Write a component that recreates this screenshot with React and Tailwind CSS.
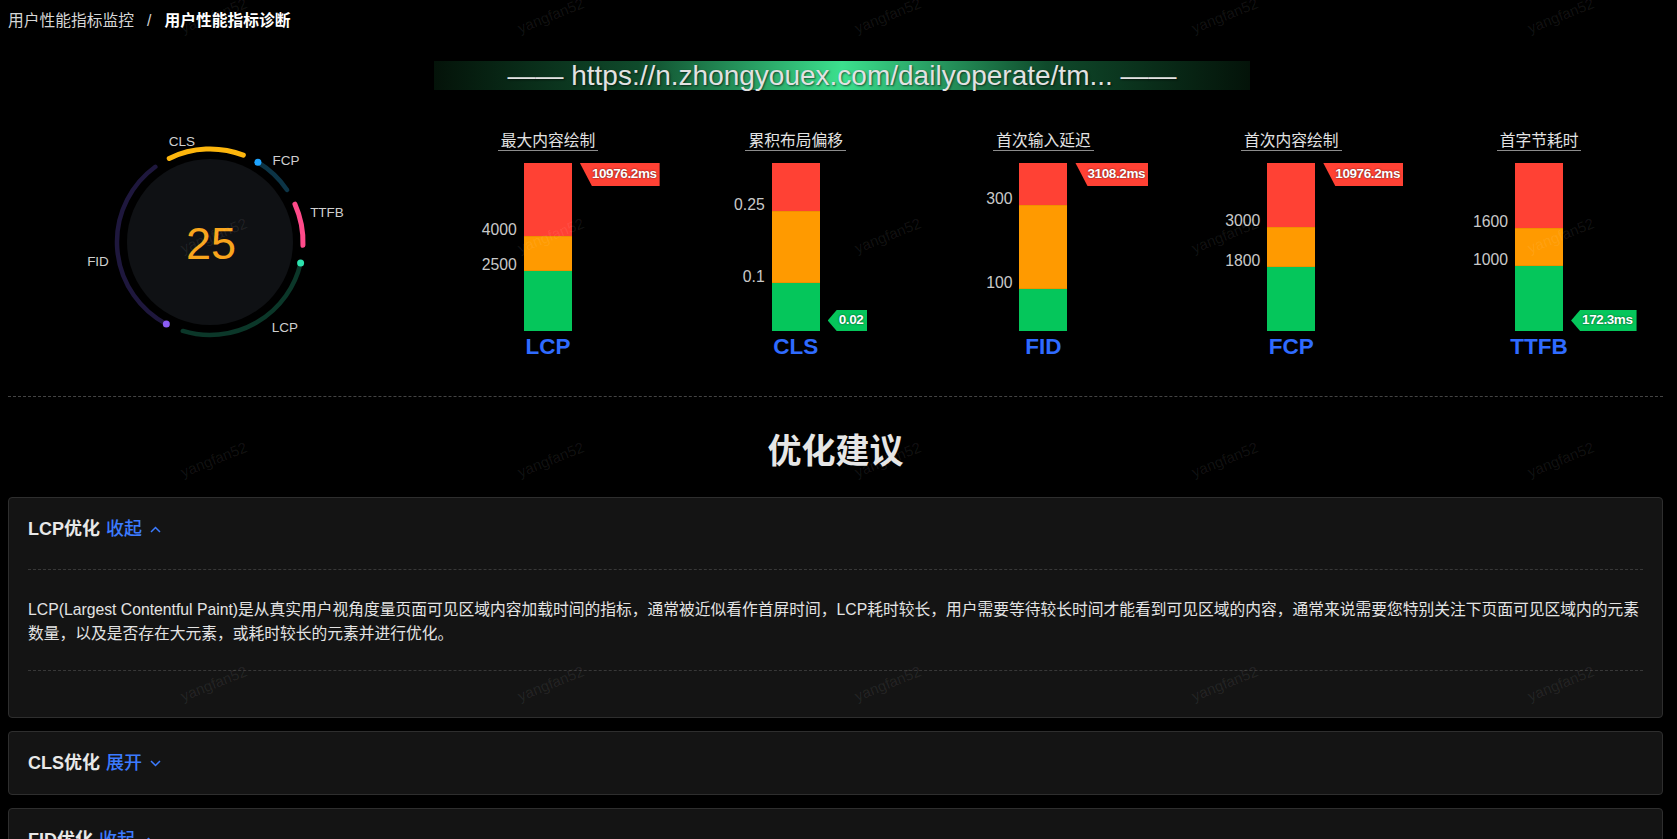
import React from "react";

const metrics = [
  { title: "最大内容绘制", name: "LCP", seg: [73, 35], marks: ["4000", "2500"], badge: "bad", value: "10976.2ms" },
  { title: "累积布局偏移", name: "CLS", seg: [48, 72], marks: ["0.25", "0.1"], badge: "good", value: "0.02" },
  { title: "首次输入延迟", name: "FID", seg: [42, 84], marks: ["300", "100"], badge: "bad", value: "3108.2ms" },
  { title: "首次内容绘制", name: "FCP", seg: [64, 40], marks: ["3000", "1800"], badge: "bad", value: "10976.2ms" },
  { title: "首字节耗时", name: "TTFB", seg: [65, 38], marks: ["1600", "1000"], badge: "good", value: "172.3ms" },
];

const watermarks = [];
for (const y of [16, 236, 460, 684]) {
  for (const x of [214, 551, 888, 1225, 1561]) watermarks.push({ x, y });
}

// gauge geometry
const cx = 202;
const cy = 132;
const R = 93;
const pt = (a) => {
  const r = (a * Math.PI) / 180;
  return [cx + R * Math.sin(r), cy - R * Math.cos(r)];
};
const arc = (a1, a2) => {
  const [x1, y1] = pt(a1);
  const [x2, y2] = pt(a2);
  const large = a2 - a1 > 180 ? 1 : 0;
  return `M ${x1} ${y1} A ${R} ${R} 0 ${large} 1 ${x2} ${y2}`;
};

function Gauge() {
  const dots = [
    [31, "#1ea4ff"],
    [103, "#2de3ae"],
    [208, "#8b5cf6"],
  ];
  return (
    <svg width="416" height="260" viewBox="0 0 416 260" className="shrink-0">
      <circle cx={cx} cy={cy} r="83" fill="#0f1114" />
      <path d={arc(-26, 21)} stroke="#fdb60d" strokeWidth="5" fill="none" strokeLinecap="round" />
      <path d={arc(31, 56)} stroke="#0c3446" strokeWidth="4.5" fill="none" strokeLinecap="round" />
      <path d={arc(66, 92)} stroke="#ff4a8a" strokeWidth="5" fill="none" strokeLinecap="round" />
      <path d={arc(103, 197)} stroke="#0b3729" strokeWidth="4.5" fill="none" strokeLinecap="round" />
      <path d={arc(208, 324)} stroke="#1e173d" strokeWidth="4.5" fill="none" strokeLinecap="round" />
      {dots.map(([a, c]) => {
        const [x, y] = pt(a);
        return <circle key={a} cx={x} cy={y} r="3.5" fill={c} />;
      })}
      <g fill="#cfcfcf" fontSize="13.5" textAnchor="middle" dominantBaseline="central">
        <text x="174" y="31">CLS</text>
        <text x="278" y="50">FCP</text>
        <text x="319" y="102">TTFB</text>
        <text x="90" y="151">FID</text>
        <text x="277" y="217">LCP</text>
      </g>
      <text x="203" y="133" fill="#f8a51c" fontSize="45" textAnchor="middle" dominantBaseline="central">
        25
      </text>
    </svg>
  );
}

function MetricBar({ m }) {
  const [red, orange] = m.seg;
  return (
    <div className="flex flex-1 basis-0 flex-col items-center pt-[21px]">
      <div className="border-b border-[#8c8c8c] px-[3px] text-[15.75px] leading-[19px] text-[#e2e2e2]">
        {m.title}
      </div>
      <div className="relative mt-[12px] flex h-[168px] w-[48px] flex-col">
        <div className="bg-[#ff4134]" style={{ height: red }} />
        <div className="border-y border-[#d98300]/40 bg-[#ff9a00]" style={{ height: orange }} />
        <div className="flex-1 bg-[#05c65b]" />
        <span
          className="absolute right-[55px] text-[15.75px] leading-[18px] text-[#c9c9c9] [text-shadow:0_0_1px_#000]"
          style={{ top: red - 15 }}
        >
          {m.marks[0]}
        </span>
        <span
          className="absolute right-[55px] text-[15.75px] leading-[18px] text-[#c9c9c9] [text-shadow:0_0_1px_#000]"
          style={{ top: red + orange - 15 }}
        >
          {m.marks[1]}
        </span>
        {m.badge === "bad" ? (
          <div className="absolute left-[56px] top-0 flex h-[23px] items-center whitespace-nowrap bg-[#ff4134] pl-[12px] pr-[3px] text-[13.5px] font-bold tracking-[-0.4px] text-white [clip-path:polygon(0_0,100%_0,100%_100%,12px_100%)] [text-shadow:0_0_2px_rgba(0,0,0,0.7)]">
            {m.value}
          </div>
        ) : (
          <div className="absolute bottom-0 left-[56px] flex h-[21px] items-center whitespace-nowrap bg-[#05c65b] pl-[11px] pr-[4px] text-[13.5px] font-bold tracking-[-0.4px] text-white [clip-path:polygon(0_50%,9px_0,100%_0,100%_100%,9px_100%)] [text-shadow:0_0_2px_rgba(0,0,0,0.7)]">
            {m.value}
          </div>
        )}
      </div>
      <div className="mt-[3px] text-[22.5px] font-bold leading-[26px] text-[#2f6bff]">{m.name}</div>
    </div>
  );
}

function Chevron({ up }) {
  return (
    <svg width="11" height="7" viewBox="0 0 11 7" className="ml-[8px]">
      <polyline
        points={up ? "1,6 5.5,1.5 10,6" : "1,1 5.5,5.5 10,1"}
        fill="none"
        stroke="#3c7bff"
        strokeWidth="1.5"
      />
    </svg>
  );
}

function AdviceCard({ name, open, children }) {
  return (
    <div className="rounded-[4px] border border-[#2e2e2e] bg-[#141414] px-[19px]">
      <div className="flex items-center py-[18px] text-[18px] leading-[26px]">
        <span className="font-bold text-[#e8e8e8]">{name}优化</span>
        <span className="ml-[6px] font-medium text-[#3c7bff]">{open ? "收起" : "展开"}</span>
        <Chevron up={open} />
      </div>
      {open && (
        <>
          <div className="mt-[9px] border-t border-dashed border-[#383838] pb-[24px] pt-[28px] text-[15.75px] leading-[24px] text-[#e3e3e3]">
            {children}
          </div>
          <div className="h-[47px] border-t border-dashed border-[#383838]" />
        </>
      )}
    </div>
  );
}

export default function App() {
  return (
    <div className="relative h-[839px] overflow-hidden bg-black pl-[8px] pr-[14px] font-['Liberation_Sans','Noto_Sans_CJK_SC',sans-serif]">
      <div className="flex items-center pt-[10px] text-[15.75px] leading-[22px]">
        <span className="text-[#d6d6d6]">用户性能指标监控</span>
        <span className="mx-[13px] text-[#cfcfcf]">/</span>
        <span className="font-bold text-white">用户性能指标诊断</span>
      </div>

      <div className="ml-[426px] mt-[29px] flex h-[29px] w-[816px] items-center justify-center whitespace-nowrap bg-[linear-gradient(90deg,#041309_0%,#0f4a2b_25%,#3ce08e_50%,#0f4a2b_75%,#041309_100%)] text-[28px] leading-[29px] text-[#e2e2e2] [text-shadow:1px_1px_2px_rgba(0,0,0,0.6)]">
        —— https://n.zhongyouex.com/dailyoperate/tm... ——
      </div>

      <div className="mt-[20px] flex h-[260px]">
        <Gauge />
        {metrics.map((m) => (
          <MetricBar key={m.name} m={m} />
        ))}
      </div>

      <div className="mt-[26px] border-t border-dashed border-[#444]" />

      <div className="mb-[23px] mt-[31px] text-center text-[34px] font-bold leading-[46px] text-[#e6e6e6]">
        优化建议
      </div>

      <div className="flex flex-col gap-[13px]">
        <AdviceCard name="LCP" open>
          LCP(Largest Contentful Paint)是从真实用户视角度量页面可见区域内容加载时间的指标，通常被近似看作首屏时间，LCP耗时较长，用户需要等待较长时间才能看到可见区域的内容，通常来说需要您特别关注下页面可见区域内的元素数量，以及是否存在大元素，或耗时较长的元素并进行优化。
        </AdviceCard>
        <AdviceCard name="CLS" open={false} />
        <AdviceCard name="FID" open>
          FID(First Input Delay)是用户第一次与页面交互到浏览器实际能够响应该交互的时间，FID耗时较长，通常是主线程被长任务阻塞，建议拆分长任务并减少首屏执行的脚本。
        </AdviceCard>
      </div>

      <div className="pointer-events-none absolute inset-0 z-10">
        {watermarks.map((w, i) => (
          <span
            key={i}
            className="absolute -translate-x-1/2 -translate-y-1/2 -rotate-[22deg] whitespace-nowrap text-[15px] text-white/[0.08]"
            style={{ left: w.x, top: w.y }}
          >
            yangfan52
          </span>
        ))}
      </div>
    </div>
  );
}
